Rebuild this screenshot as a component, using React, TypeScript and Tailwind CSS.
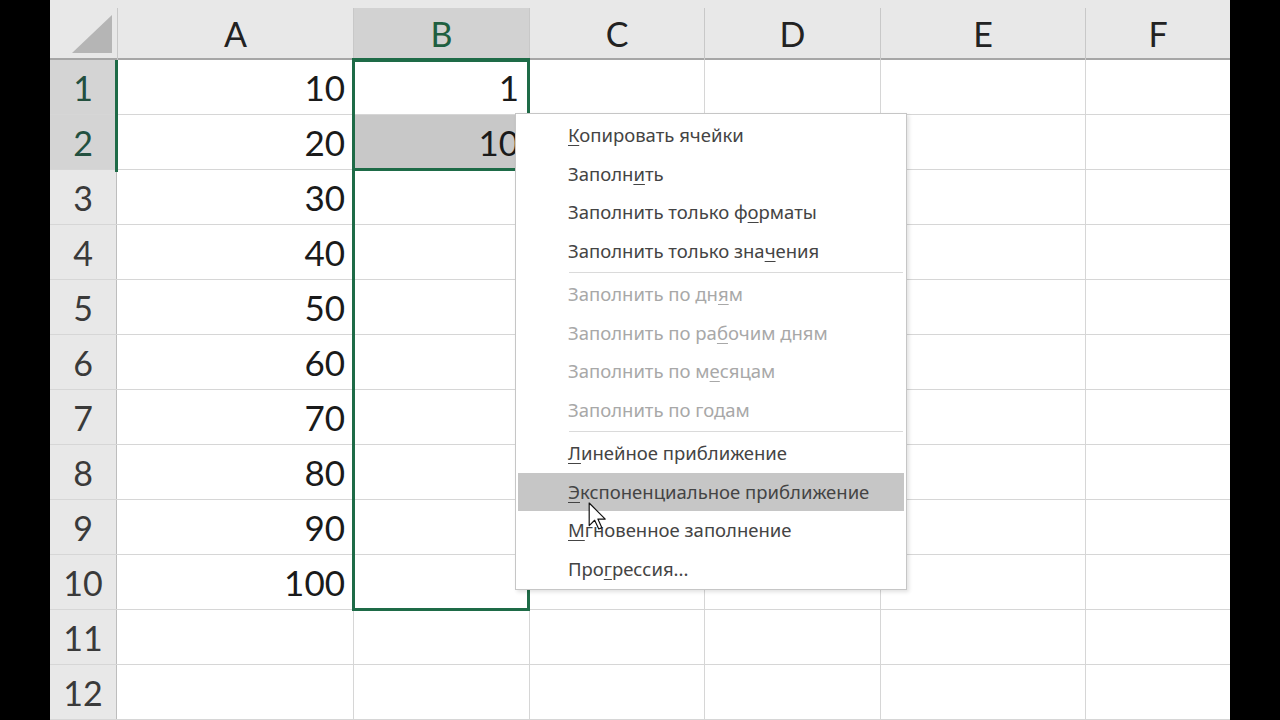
import React from 'react';

const cols = [
    { name: 'A', w: 'w-[236px]' },
    { name: 'B', w: 'w-[176px]' },
    { name: 'C', w: 'w-[175px]' },
    { name: 'D', w: 'w-[176px]' },
    { name: 'E', w: 'w-[205px]' },
    { name: 'F', w: 'w-[145px]' },
];

const colA = ['10', '20', '30', '40', '50', '60', '70', '80', '90', '100', '', ''];

type Item = { pre: string; key: string; post: string; disabled?: boolean; active?: boolean } | 'sep';

const menu: Item[] = [
    { pre: '', key: 'К', post: 'опировать ячейки' },
    { pre: 'Заполн', key: 'и', post: 'ть' },
    { pre: 'Заполнить только ф', key: 'о', post: 'рматы' },
    { pre: 'Заполнить только зна', key: 'ч', post: 'ения' },
    'sep',
    { pre: 'Заполнить по дн', key: 'я', post: 'м', disabled: true },
    { pre: 'Заполнить по ра', key: 'б', post: 'очим дням', disabled: true },
    { pre: 'Заполнить по м', key: 'е', post: 'сяцам', disabled: true },
    { pre: 'Заполнить по годам', key: '', post: '', disabled: true },
    'sep',
    { pre: '', key: 'Л', post: 'инейное приближение' },
    { pre: '', key: 'Э', post: 'кспоненциальное приближение', active: true },
    { pre: '', key: 'М', post: 'гновенное заполнение' },
    { pre: 'Про', key: 'г', post: 'рессия...' },
];

const cellFont = { fontFamily: 'Lato, "Open Sans", sans-serif' };

export default function App() {
    return (
        <div className="relative h-[720px] w-[1280px] overflow-hidden bg-black">
            <div className="relative ml-[50px] h-[720px] w-[1180px] overflow-hidden bg-white" style={cellFont}>
                {/* Column headers */}
                <div className="flex h-[60px] border-b-2 border-[#a6a6a6] bg-[#e8e8e8]">
                    <div className="relative flex h-full w-[67px] items-end justify-end pb-[5px] pr-[5px]">
                        <svg width="40" height="38" viewBox="0 0 40 38">
                            <polygon points="0,38 40,0 40,38" fill="#b5b5b5" />
                        </svg>
                    </div>
                    {cols.map((c) => (
                        <div
                            key={c.name}
                            className={`${c.w} mt-[8px] flex h-[52px] items-center justify-center border-l border-[#c8c8c8] pb-[2px] text-[34px] ${
                                c.name === 'B' ? 'bg-[#d2d2d2] text-[#1f5f40]' : 'text-[#222]'
                            }`}
                        >
                            {c.name}
                        </div>
                    ))}
                </div>

                {/* Rows */}
                {colA.map((v, i) => (
                    <div key={i} className="flex h-[55px] border-b border-[#d6d6d6]">
                        <div
                            className={`flex w-[67px] items-center justify-center border-r border-[#bdbdbd] text-[34px] ${
                                i < 2 ? 'bg-[#d4d4d4] text-[#23503f]' : 'bg-[#e8e8e8] text-[#3a3a3a]'
                            }`}
                        >
                            {i + 1}
                        </div>
                        <div className="flex w-[236px] items-center justify-end pr-[8px] text-[35px] text-[#1a1a1a]">{v}</div>
                        <div
                            className={`flex w-[176px] items-center justify-end border-l border-[#d6d6d6] pr-[10px] text-[35px] text-[#1a1a1a] ${
                                i === 1 ? 'bg-[#c8c8c8]' : ''
                            }`}
                        >
                            {i === 0 ? '1' : i === 1 ? '10' : ''}
                        </div>
                        <div className="w-[175px] border-l border-[#d6d6d6]" />
                        <div className="w-[176px] border-l border-[#d6d6d6]" />
                        <div className="w-[205px] border-l border-[#d6d6d6]" />
                        <div className="w-[145px] border-l border-[#d6d6d6]" />
                    </div>
                ))}

                {/* Selection highlights */}
                <div className="absolute left-[65px] top-[60px] h-[112px] w-[3px] bg-[#1e6b47]" />
                <div className="absolute left-[302px] top-[58px] h-[3px] w-[178px] bg-[#1e6b47]" />
                <div className="absolute left-[302px] top-[59px] h-[552px] w-[178px] border-[3px] border-[#1e6b47]" />
                <div className="absolute left-[302px] top-[168px] h-[3px] w-[178px] bg-[#1e6b47]" />
            </div>

            {/* Context menu */}
            <div
                className="absolute left-[515px] top-[113px] w-[392px] border border-[#c6c6c6] bg-white pb-[1px] pt-[2px] shadow-[2px_2px_4px_rgba(0,0,0,0.12)]"
                style={{ fontFamily: '"Noto Sans", "Open Sans", sans-serif' }}
            >
                {menu.map((m, i) =>
                    m === 'sep' ? (
                        <div key={i} className="py-[2px] pl-[53px] pr-[3px]">
                            <div className="h-px bg-[#dadada]" />
                        </div>
                    ) : (
                        <div
                            key={i}
                            className={`mx-[2px] flex h-[38.5px] items-center pl-[50px] text-[18.5px] ${
                                m.active ? 'bg-[#c6c6c6]' : ''
                            } ${m.disabled ? 'text-[#a8a8a8]' : 'text-[#444]'}`}
                        >
                            <span>
                                {m.pre}
                                {m.key && <span className="underline decoration-1 underline-offset-[3px]">{m.key}</span>}
                                {m.post}
                            </span>
                        </div>
                    ),
                )}
            </div>

            {/* Mouse pointer */}
            <svg className="absolute left-[588px] top-[502px]" width="18" height="28" viewBox="0 0 12 19">
                <path d="M0.7 0.7 V16 L4.4 12.4 L7.2 18.3 L9.3 17.4 L6.6 11.6 H11.6 Z" fill="#fff" stroke="#111" strokeWidth="0.8" strokeLinejoin="round" />
            </svg>
        </div>
    );
}
